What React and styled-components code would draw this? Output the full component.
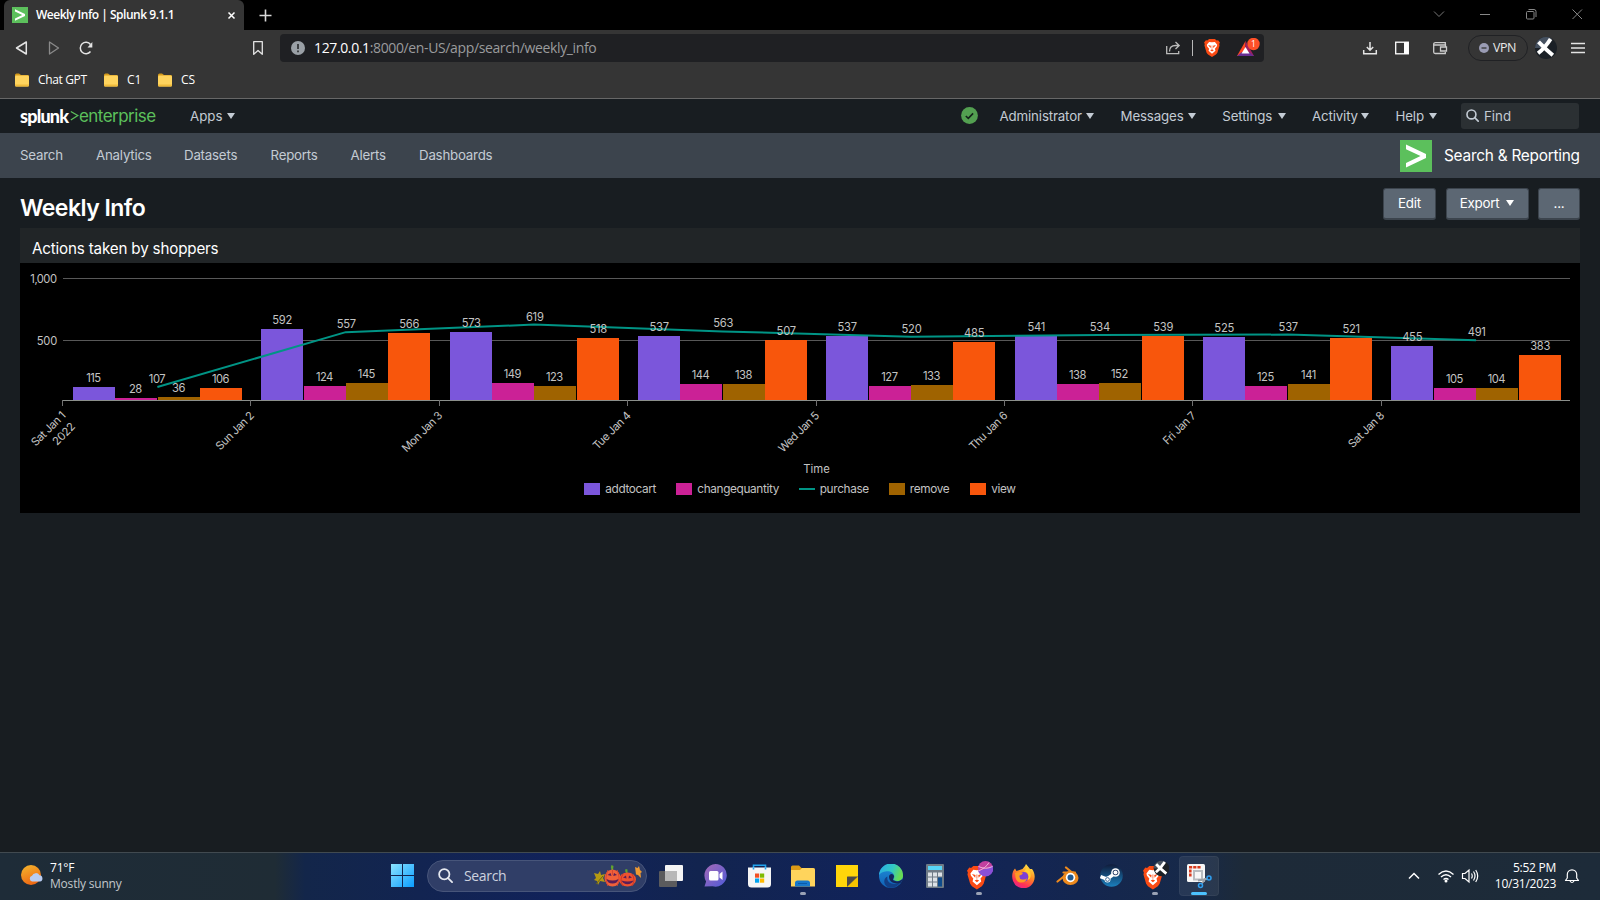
import React from "react";
import styled, { createGlobalStyle, css } from "styled-components";

const Global = createGlobalStyle`
  * { box-sizing: border-box; }
  body { margin: 0; background: #181d21; overflow: hidden; }
  svg { display: block; flex: none; }
`;

const ui = `"Open Sans", "Noto Sans", sans-serif`;
const web = `Inter, Roboto, sans-serif`;

const Screen = styled.div`
  width: 1600px;
  height: 900px;
  display: flex;
  flex-direction: column;
  background: #181d21;
  font-family: ${web};
  white-space: nowrap;
`;

/* Text with an optional fixed advance, so neighbours keep their place */
const Text = styled.span`
  flex: none;
  width: ${(p) => (p.$w ? p.$w + "px" : "auto")};
  letter-spacing: ${(p) => p.$ls || 0}px;
`;

/* ---------- browser ---------- */
const TabStrip = styled.div`
  height: 30px;
  flex: none;
  background: #000;
  display: flex;
  align-items: center;
  padding-left: 4px;
  font-family: ${ui};
`;
const Tab = styled.div`
  width: 240px;
  height: 30px;
  background: #353535;
  border-radius: 6px 6px 0 0;
  display: flex;
  align-items: center;
  padding: 0 8px 0 8px;
  color: #fff;
  font-size: 12px;
  font-weight: 600;
`;
const TabTitle = styled.span`
  flex: 1;
  margin-left: 8px;
  padding-bottom: 1px;
  letter-spacing: -0.48px;
`;
const NewTab = styled.div`
  margin-left: 15px;
  flex: 1;
`;
const WindowButtons = styled.div`
  display: flex;
  gap: 34px;
  margin-right: 17px;
  padding-bottom: 2px;
`;
const Toolbar = styled.div`
  height: 35px;
  flex: none;
  background: #353535;
  display: flex;
  align-items: center;
  padding: 1px 14px 0 14px;
  font-family: ${ui};
`;
const NavButtons = styled.div`
  display: flex;
  gap: 16px;
  width: 237px;
`;
const AddressBar = styled.div`
  margin-left: 15px;
  width: 984px;
  height: 28px;
  background: #1f2023;
  border-radius: 4px;
  display: flex;
  align-items: center;
  padding: 0 3px 0 11px;
`;
const Url = styled.span`
  flex: 1;
  margin-left: 9px;
  padding-bottom: 1px;
  font-size: 14px;
  letter-spacing: -0.37px;
  color: #9a9b9d;
  b { color: #fff; font-weight: 400; }
`;
const BarIcons = styled.div`
  display: flex;
  align-items: center;
`;
const Divider = styled.div`
  width: 1px;
  height: 16px;
  background: #b9b9b9;
  margin: 0 11px 0 11px;
`;
const ToolIcons = styled.div`
  flex: 1;
  display: flex;
  align-items: center;
  justify-content: flex-end;
`;
const Vpn = styled.div`
  width: 60px;
  height: 26px;
  margin: 0 6px 0 20px;
  border: 1px solid #202124;
  border-radius: 13px;
  display: flex;
  align-items: center;
  padding: 0 0 1px 10px;
  gap: 4px;
  color: #e8e8e8;
  font-size: 12.5px;
  letter-spacing: -0.5px;
`;
const Bookmarks = styled.div`
  height: 34px;
  flex: none;
  background: #353535;
  border-bottom: 1px solid #676767;
  display: flex;
  align-items: center;
  padding: 0 0 4px 14px;
  font-family: ${ui};
  font-size: 12px;
  color: #fff;
`;
const Bookmark = styled.div`
  display: flex;
  align-items: center;
  gap: 8px;
  margin-right: ${(p) => p.$mr}px;
`;

/* ---------- splunk chrome ---------- */
const SplunkBar = styled.div`
  height: 34px;
  flex: none;
  display: flex;
  align-items: center;
  padding: 0 21px 1px 20px;
  color: #c3cbd4;
  font-size: 13.3px;
`;
const Logo = styled.div`
  width: 170px;
  display: flex;
  align-items: center;
  line-height: 20px;
`;
const LogoWord = styled.span`
  width: 50px;
  font-family: Lato, sans-serif;
  font-weight: 900;
  font-size: 18px;
  letter-spacing: -0.8px;
  color: #fff;
`;
const LogoProduct = styled.span`
  font-family: ${web};
  font-size: 17px;
  letter-spacing: -0.55px;
  color: #5cc05c;
`;
const MenuItem = styled.div`
  display: flex;
  align-items: center;
  margin-right: ${(p) => p.$mr || 0}px;
`;
const Caret = styled.i`
  width: 0;
  height: 0;
  border: 4px solid transparent;
  border-top: 6px solid currentColor;
  border-bottom: 0;
  margin-left: ${(p) => p.$ml || 4.5}px;
`;
const Spacer = styled.div`
  flex: 1;
`;
const FindBox = styled.div`
  width: 118px;
  height: 26px;
  margin-top: 1px;
  border-radius: 3px;
  background: #2b3033;
  display: flex;
  align-items: center;
  gap: 5px;
  padding: 0 0 1px 5px;
`;
const AppNav = styled.nav`
  height: 45px;
  flex: none;
  background: #3c444d;
  display: flex;
  align-items: center;
  padding: 0 20px;
  color: #c3cbd4;
  font-size: 13.3px;
`;
const NavLink = styled(Text)`
  padding-bottom: 1px;
`;
const AppName = styled.div`
  display: flex;
  align-items: center;
  gap: 12px;
  color: #fff;
  font-size: 15.4px;
`;
const TitleRow = styled.div`
  height: 50px;
  flex: none;
  display: flex;
  justify-content: space-between;
  padding: 10px 20px 0;
`;
const Title = styled.h1`
  margin: 4px 0 0;
  font-size: 23px;
  line-height: 32px;
  font-weight: 600;
  letter-spacing: -0.53px;
  color: #fff;
`;
const Buttons = styled.div`
  display: flex;
  gap: 9.5px;
`;
const Button = styled.div`
  width: ${(p) => p.$w}px;
  height: 32px;
  border: 1px solid #3c444d;
  border-bottom-width: 2px;
  border-radius: 3px;
  background: #5c6773;
  color: #fff;
  display: flex;
  align-items: center;
  justify-content: center;
  padding-bottom: 1px;
  font-size: 13.4px;
  letter-spacing: -0.25px;
`;
const Panel = styled.section`
  margin: 0 20px;
  height: 285px;
  flex: none;
  background: #000;
`;
const PanelHead = styled.div`
  height: 35px;
  background: #212527;
  padding: 4px 0 0 12px;
  line-height: 33px;
  color: #fff;
  font-size: 15.2px;
  letter-spacing: -0.18px;
`;
const AxisTitle = styled.div`
  height: 16px;
  line-height: 17px;
  text-align: center;
  padding-left: 33px;
  font-size: 11.3px;
  color: #c3c3c3;
`;
const Legend = styled.div`
  height: 24px;
  display: flex;
  align-items: center;
  justify-content: center;
  gap: 20.5px;
  font-size: 11.8px;
  color: #c3c3c3;
`;
const LegendItem = styled.div`
  display: flex;
  align-items: center;
  gap: 5px;
`;
const Swatch = styled.i`
  width: 16px;
  height: ${(p) => (p.$line ? 2 : 12)}px;
  background: ${(p) => p.$c};
`;

/* ---------- chart ---------- */
const DAYS = [
  ["Sat Jan 1", 115, 28, 107, 36, 106],
  ["Sun Jan 2", 592, 124, 557, 145, 566],
  ["Mon Jan 3", 573, 149, 619, 123, 518],
  ["Tue Jan 4", 537, 144, 563, 138, 507],
  ["Wed Jan 5", 537, 127, 520, 133, 485],
  ["Thu Jan 6", 541, 138, 534, 152, 539],
  ["Fri Jan 7", 525, 125, 537, 141, 521],
  ["Sat Jan 8", 455, 105, 491, 104, 383],
];
const COLORS = ["#7b56db", "#cb2196", "#9f6300", "#f8560c"];
const STEP = 188.38;
const X0 = 62.5;
const barTop = (v) => Math.round(401 - v * 0.121);
const lineY = (v) => 400 - v * 0.1218;

const ChartText = styled.text`
  font-family: ${web};
  font-size: ${(p) => p.$size || 11.2}px;
  letter-spacing: ${(p) => p.$ls || 0}px;
  fill: #c3c3c3;
`;

function Chart() {
  const pts = DAYS.map((d, i) => [X0 + (i + 0.5) * STEP + 0.7, lineY(d[3]), d[3]]);
  const bars = DAYS.flatMap((d, i) =>
    [d[1], d[2], d[4], d[5]].map((v, k) => ({
      v,
      c: COLORS[k],
      x: Math.round(X0 + i * STEP + 10.32 + k * 42.35),
      y: barTop(v),
    }))
  );
  return (
    <svg width="1560" height="198" viewBox="20 263 1560 198">
      <path d="M63 278.5H1570M63 340.5H1570" stroke="#585858" />
      {bars.map((b) => (
        <rect key={b.x} x={b.x} y={b.y} width="42" height={400 - b.y} fill={b.c} />
      ))}
      <path d="M62 400.5H1570" stroke="#8b8f8b" />
      {DAYS.map((d, i) => (
        <path key={i} d={`M${Math.floor(X0 + i * STEP) + 0.5} 400V406`} stroke="#707070" />
      ))}
      <polyline points={pts.map((p) => p[0] + "," + p[1]).join(" ")} fill="none" stroke="#009485" strokeWidth="2" strokeLinejoin="round" />
      {bars.map((b) => (
        <ChartText key={b.x} x={b.x + (b.v < 200 ? 20.4 : 21.2)} y={b.y - 4.6} textAnchor="middle" $ls={b.v < 200 ? -0.5 : -0.25}>{b.v}</ChartText>
      ))}
      {pts.map((p) => (
        <ChartText key={p[0]} x={p[0] + (p[2] < 200 ? -0.4 : 0.6)} y={p[1] - 4} textAnchor="middle" $ls={p[2] < 200 ? -0.5 : -0.25}>{p[2]}</ChartText>
      ))}
      <ChartText x="56.500" y="283" textAnchor="end" $ls={-0.5}>1,000</ChartText>
      <ChartText x="57" y="344.5" textAnchor="end" $ls={-0.2}>500</ChartText>
      {DAYS.map((d, i) => (
        <g key={i} transform={`translate(${X0 + i * STEP + 3.6} 416.5) rotate(-45)`}>
          <ChartText textAnchor="end" $size={11.2} $ls={-0.5}>{d[0]}</ChartText>
          {i === 0 && <ChartText x="-1" y="14.5" textAnchor="end" $size={11.2} $ls={-0.3}>2022</ChartText>}
        </g>
      ))}
    </svg>
  );
}

/* ---------- taskbar ---------- */
const Taskbar = styled.div`
  margin-top: auto;
  height: 48px;
  flex: none;
  border-top: 1px solid #414a50;
  background: linear-gradient(90deg, #1e2c38 0, #1f2c35 275px, #13264a 305px, #122451 420px, #11225a 560px, #12244f 700px, #11235a 880px, #14264f 1080px, #172949 1190px, #1d2a38 1245px, #1d2b39 100%);
  display: flex;
  align-items: center;
  padding-bottom: 2px;
  font-family: ${ui};
  color: #fff;
`;
const Weather = styled.div`
  width: 370px;
  padding-left: 20px;
  display: flex;
  align-items: center;
  gap: 6px;
  font-size: 12px;
  line-height: 16px;
  letter-spacing: -0.2px;
`;
const Muted = styled.div`
  color: #c2c7cb;
`;
const TaskIcons = styled.div`
  display: flex;
  align-items: center;
  gap: 4px;
`;
const TaskSlot = styled.div`
  position: relative;
  width: 40px;
  height: 40px;
  border-radius: 4px;
  display: flex;
  align-items: center;
  justify-content: center;
  margin-left: ${(p) => p.$ml || 0}px;
  ${(p) => p.$active && css`background: #ffffff12; box-shadow: inset 0 0 0 1px #ffffff0c;`}
  ${(p) => (p.$active || p.$open) && css`
    &::after {
      content: "";
      position: absolute;
      bottom: 1px;
      left: 50%;
      transform: translateX(-50%);
      width: ${p.$active ? 16 : 6}px;
      height: 3px;
      border-radius: 2px;
      background: ${p.$active ? "#4cc2ff" : "#9aa2b5"};
    }
  `}
`;
const SearchBox = styled.div`
  width: 220px;
  height: 32px;
  margin: 0 0 0 1px;
  border-radius: 16px;
  border: 1px solid #47557a;
  background: #303e67;
  display: flex;
  align-items: center;
  padding: 0 3px 0 10px;
  font-size: 14px;
  letter-spacing: -0.35px;
  color: #cdd2df;
`;
const SearchHint = styled.span`
  flex: 1;
  margin-left: 11px;
  padding-bottom: 1px;
`;
const Tray = styled.div`
  margin-left: auto;
  margin-right: 20px;
  display: flex;
  align-items: center;
`;
const Clock = styled.div`
  width: 77px;
  margin-right: 8px;
  text-align: right;
  font-size: 12px;
  line-height: 16px;
  letter-spacing: -0.25px;
`;

/* ---------- drawings ---------- */
const Svg = styled.svg`
  margin-left: ${(p) => p.$ml || 0}px;
`;
const S = ({ w = 24, h = w, vb, ml, children }) => (
  <Svg $ml={ml} width={w} height={h} viewBox={vb || `0 0 ${w} ${h}`} fill="none">{children}</Svg>
);
const SplunkMark = ({ size }) => (
  <S w={size} vb="0 0 32 32">
    <path fill="#5cc05c" d="M0 0h32v32H0z" />
    <path fill="#fff" d="M6 4.5 26 14v4L6 27.500v-4.600L20.500 16 6 9.200z" />
  </S>
);
const Folder = () => (
  <S w={16} h={14}>
    <path d="M1 2Q1 .5 2.500.5H5l2 1.500h7Q15 2 15 3.500v2H1z" fill="#d49a1c" />
    <rect x="1" y="2.500" width="14" height="11" rx="1.200" fill="#ffd45e" />
    <path d="M1 12.500Q1 13.500 2.200 13.500h11.600Q15 13.500 15 12.300V11.500H1z" fill="#f0bb3c" />
  </S>
);
const Lion = () => (
  <>
    <path d="M4.500 2 7 0h8l2.500 2 2-.3L22 5l-1 2 .5 2-3 10-2 2.500L11 25l-5.500-3.500-2-2.500-3-10L1 7 0 5l2.500-3.300z" fill="#fb4b14" />
    <path d="M11 4.500 7 4 3.800 8l.6 2.400 2.600 3-.8 3L11 20.500l4.800-4.100-.8-3 2.600-3 .6-2.400L15 4z" fill="#fff" />
    <path d="m5.500 8.500 4 1-.4 3zm11 0-4 1 .4 3zM8.500 15.500l2.500-1.200 2.500 1.200L11 17.300z" fill="#fb4b14" />
    <path d="M11 9v4.500" stroke="#fb4b14" strokeWidth=".8" />
  </>
);
const XMark = ({ r }) => (
  <g>
    <circle r={r} fill="#1b2026" />
    <path d={`M${-r} 0A${r} ${r} 0 0 1 ${r * 0.5} ${-r * 0.86}L0 0z`} fill="#465160" />
    <path d={`M${-r * 0.68} ${-r * 0.55}Q0 ${r * 0.15} ${r * 0.62} ${r * 0.66}M${r * 0.42} ${-r * 0.82}Q${-r * 0.1} 0 ${-r * 0.72} ${r * 0.48}`} stroke="#fff" strokeWidth={r * 0.36} />
  </g>
);
const Search = ({ s, sw = 1.6, c }) => (
  <S w={s} vb="0 0 16 16">
    <circle cx="6.700" cy="6.700" r="5.500" stroke={c} strokeWidth={sw} />
    <path d="m10.700 10.700 4.300 4.300" stroke={c} strokeWidth={sw} strokeLinecap="round" />
  </S>
);

const Pumpkins = () => (
  <S w={50} h={24}>
    <path d="m1 9 4 1 2-3 1 4 4-1-2 4 2 4-5-1-2 4-1-4-3-1 2-2z" fill="#b59a12" />
    <path d="m3 20 7-8" stroke="#6d6510" />
    <path d="M18.500 6Q17 3 18.500 1l2 1-.5 4z" fill="#61a52f" />
    <ellipse cx="19.500" cy="14" rx="8" ry="8.600" fill="#f0613a" />
    <path d="M15 6q-4 8 0 16M24 6q4 8 0 16M19.500 6v5" stroke="#d94632" />
    <path d="m14.500 11 3-2 1 3zm9.500 0-3-2-.7 3zM13.500 15q6 3 12 0-1 4.500-6 4.500t-6-4.500" fill="#5b1d57" />
    <path d="M33 9q-1.500-2-.5-4l2 .5V9z" fill="#61a52f" />
    <ellipse cx="34.500" cy="15.500" rx="8.500" ry="7" fill="#ee5230" />
    <path d="M30 10q-4 6 0 12M39 10q4 6 0 12" stroke="#cb3826" />
    <path d="m30 13.500 3-2 .5 3zm9 0-3-2-.5 3zM28.500 16.500q6 1.800 12 0-2 3.800-6 3.800t-6-3.800" fill="#5b1d57" />
    <path d="m42 3 2.500 1L46 2l1 4 2 2-1.500 1 .5 5-3-3-2-.5z" fill="#ef9a32" />
  </S>
);

const Start = () => (
  <S w={23}>
    <defs><linearGradient id="win" gradientUnits="userSpaceOnUse" x1="0" y1="0" x2="23" y2="23"><stop stopColor="#8be3ff" /><stop offset="1" stopColor="#0a9dff" /></linearGradient></defs>
    <path fill="url(#win)" d="M0 0h11v11H0zM12 0h11v11H12zM0 12h11v11H0zM12 12h11v11H12z" />
  </S>
);
const TaskView = () => (
  <S w={24} h={22}>
    <rect x="6" width="18" height="16" rx="1" fill="#f4f4f4" />
    <rect y="6" width="18" height="16" rx="1" fill="#5b5b5d" />
    <path d="M6 6h12v10H6z" fill="#b7b7b7" />
  </S>
);
const Chat = () => (
  <S w={23}>
    <defs><linearGradient id="chat" x1="0" y1="0" x2="1" y2="1"><stop stopColor="#a569b6" /><stop offset="1" stopColor="#4f5bd8" /></linearGradient></defs>
    <path d="M11.500 0a11.300 11.300 0 1 1-3 22.200L.5 22.500l1.600-5A11.500 11.500 0 0 1 11.500 0" fill="url(#chat)" />
    <rect x="5" y="7" width="9.500" height="9.500" rx="1.500" fill="#fff" />
    <path d="m15.500 10 3-2.500v8.500l-3-2.500z" fill="#fff" />
  </S>
);
const Store = () => (
  <S w={23} h={24}>
    <path d="M5.500 6V1.200h12V6" stroke="#21a3ee" strokeWidth="1.600" />
    <path d="M0 3.500h23V20q0 3.500-3.500 3.500h-16Q0 23.500 0 20z" fill="#f5f5f5" />
    <path d="M5.500 5.500V3.500M17.500 5.500V3.500" stroke="#21a3ee" strokeWidth="1.600" />
    <path d="M7 9.500h4.200v4.200H7z" fill="#f25022" /><path d="M12 9.500h4.200v4.200H12z" fill="#7fba00" />
    <path d="M7 14.500h4.200v4.200H7z" fill="#00a4ef" /><path d="M12 14.500h4.200v4.200H12z" fill="#ffb900" />
  </S>
);
const Explorer = () => (
  <S w={24} h={22}>
    <path d="M0 2Q0 .5 1.500.5H8L10.500 3H22q2 0 2 2v4H0z" fill="#dc9a16" />
    <path d="M0 5h9l2-2h11q2 0 2 2v16.500H0z" fill="#ffd45c" />
    <path d="M4 21.500V18q0-2.500 2.500-2.500h10Q19 15.500 19 18v3.500z" fill="#1778cc" /><path d="M7 18.500h9" stroke="#0b5ba8" />
  </S>
);
const Notes = () => (
  <S w={22}>
    <path d="M0 0h22v11.500L11 22H0z" fill="#ffd60a" />
    <path d="M11 22V12q0-.5.5-.5H22z" fill="#4c4a48" />
    <path d="M11 22h11V11.500z" fill="#f5c400" />
  </S>
);
const Edge = () => (
  <S w={24}>
    <defs>
      <linearGradient id="e1" x1="0" y1="0" x2="1" y2=".3"><stop stopColor="#2aa9e8" /><stop offset=".6" stopColor="#32c8c3" /><stop offset="1" stopColor="#67db55" /></linearGradient>
      <linearGradient id="e2" x1="0" y1="0" x2="0" y2="1"><stop stopColor="#1e8fdb" /><stop offset="1" stopColor="#1160b4" /></linearGradient>
    </defs>
    <circle cx="12" cy="12" r="12" fill="url(#e2)" />
    <path d="M0 11A12 12 0 0 1 24 12c0 5-6 6-9 4.300-1.500-.8.500-1.800.3-4C15 8.500 11 6.800 7.500 7.200 4 7.500 1 9 0 11" fill="url(#e1)" />
    <path d="M8.500 12.500c-1.500 6 5 9.500 13 6-3 4.500-8 6-12 5-6-3-5-9.500-1-11" fill="#123f86" />
    <path d="M15 12.300c0 2-2 3.200-.2 4.300 2.500 1.400 6 1 8.700-1.600-.5 2-1 2.800-1.800 3.800-5 2-12-.6-11.700-6.300.2-3 4.500-3.500 5-.2" fill="#13265a" />
  </S>
);
const Calc = () => (
  <S w={18} h={24}>
    <rect width="18" height="24" rx="1" fill="#6f7b86" /><path d="M2 2h14v4H2z" fill="#57d5f7" />
    <path d="M2 8.500h4v4H2zm5 0h4v4H7zm5 0h4v4h-4zM2 13.500h4v4H2zm5 0h4v4H7zM2 18.500h4v4H2zm5 0h4v4H7z" fill="#dde2e6" />
    <path d="M12 13.500h4v9h-4z" fill="#0f4c8c" />
  </S>
);
const BraveTask = ({ x }) => (
  <S w={28} h={32}>
    <g transform="translate(2 6) scale(.9 .94)"><Lion /></g>
    {x ? <g transform="translate(20.500 8.500)"><XMark r={7.800} /></g> : (
      <g>
        <circle cx="20.500" cy="8.500" r="7.600" fill="#c2409f" />
        <path d="M13 10.500Q21 10 27.500 5.500A7.600 7.600 0 0 1 13.500 12z" fill="#8a50d8" />
        <path d="M13.500 6.500q7 3.500 14 0M13.200 11Q21 8 24 2.500" stroke="#f3b5dc" />
      </g>
    )}
  </S>
);
const Firefox = () => (
  <S w={23} h={24}>
    <defs><linearGradient id="ff" x1=".8" y1="0" x2=".3" y2="1"><stop stopColor="#fff04a" /><stop offset=".45" stopColor="#ff8a22" /><stop offset=".8" stopColor="#ff3156" /><stop offset="1" stopColor="#e3258c" /></linearGradient></defs>
    <path d="M3 4.500 4.500 7l3-1 3-1L13 2l1-2 4 5 2 0c3 4 3.500 9 1.500 13A11.200 11.200 0 0 1 1 17C-.8 12 .5 7 3 4.500" fill="url(#ff)" />
    <circle cx="11.500" cy="13" r="5" fill="#7d3fd6" />
    <path d="M3 9q5-2 8 0-1 2-3.500 2.500Q7 15 10 15.500q4 .5 5-1.500-1 4.500-5.500 4.500-5 0-6-5z" fill="#ff9a24" />
    <path d="M12 8q3-1 4 2 1.500 3-.5 6 4-1 3-7-1-4-4-5z" fill="#ffcf32" />
  </S>
);
const Blender = () => (
  <S w={23} h={20}>
    <path d="M7.500 6.500H19M1.500 15.500 14 5.500M10 1.500l6 5" stroke="#ee8a1d" strokeWidth="2.200" strokeLinecap="round" />
    <ellipse cx="14.500" cy="12" rx="8" ry="7" fill="#ee8a1d" /><circle cx="14.500" cy="11.500" r="4.700" fill="#fff" /><circle cx="14.500" cy="11.500" r="3" fill="#235a91" />
  </S>
);
const Steam = () => (
  <S w={23}>
    <defs><linearGradient id="st" x1="0" y1="0" x2="0" y2="1"><stop stopColor="#101b3a" /><stop offset="1" stopColor="#1b80bd" /></linearGradient></defs>
    <circle cx="11.500" cy="11.500" r="11.300" fill="url(#st)" />
    <path d="M.5 12.500 7 15l5-3.500 3-4" stroke="#fff" strokeWidth="3.400" />
    <circle cx="15.500" cy="8.500" r="4.300" fill="#fff" /><circle cx="15.500" cy="8.500" r="2.800" fill="#19305a" /><circle cx="15.500" cy="8.500" r="2" fill="#fff" />
    <circle cx="7.500" cy="15.500" r="3" fill="#fff" /><circle cx="7.500" cy="15.500" r="1.900" stroke="#1b4e80" strokeWidth=".8" />
  </S>
);
const Snip = () => (
  <S w={26} h={26}>
    <rect x="1" y="1" width="18" height="18" rx="1.500" fill="#f7f7f7" />
    <path d="M3 3h3.200v2.600H3zM7.200 3h3.200v2.600H7.200zM11.400 3h3.200v2.600h-3.200zM3 6.600h2.600v3H3zM3 10.600h2.600v3H3z" fill="#d83b1e" />
    <path d="M8 16.500V8h8v8.500z" stroke="#b8bcc0" strokeWidth="2" />
    <path d="m15.800 20.500 4-5M12 17.500l9-1.500" stroke="#9a9fa5" strokeWidth="1.800" />
    <circle cx="23" cy="15" r="2" stroke="#2f9ff0" strokeWidth="1.500" /><circle cx="14.500" cy="22.500" r="2" stroke="#2f9ff0" strokeWidth="1.500" />
  </S>
);

const LEGEND = [
  ["addtocart", COLORS[0], 50.5],
  ["changequantity", COLORS[1], 81],
  ["purchase", "#009485", 48.5],
  ["remove", COLORS[2], 40],
  ["view", COLORS[3], 24.5],
];
const NAV = [["Search", 76], ["Analytics", 88], ["Datasets", 86.5], ["Reports", 80], ["Alerts", 68.5], ["Dashboards", 80]];
const MENUS = [["Administrator", 82, 26.5], ["Messages", 62.5, 26.8], ["Settings", 50.7, 26.5], ["Activity", 44.5, 26.5], ["Help", 29, 24]];

export default function App() {
  const g = "#e4e4e4";
  return (
    <Screen>
      <Global />
      <TabStrip>
        <Tab>
          <SplunkMark size={16} />
          <TabTitle>Weekly Info | Splunk 9.1.1</TabTitle>
          <S w={9}><path d="m1.500 1.500 6 6m0-6-6 6" stroke="#fff" strokeWidth="1.500" /></S>
        </Tab>
        <NewTab><S w={13}><path d="M6.500.5v12m-6-6h12" stroke="#d8d8d8" strokeWidth="1.600" /></S></NewTab>
        <WindowButtons>
          <S w={12}><path d="m1 3.500 5 5 5-5" stroke="#777" /></S>
          <S w={12}><path d="M1 6.500h10" stroke="#888" /></S>
          <S w={12}><rect x="1.500" y="3.500" width="7.500" height="7.500" rx="1" stroke="#888" /><path d="M3.500 1.500H9q2 0 2 2V9" stroke="#888" /></S>
          <S w={12}><path d="m1.500 1.500 9.500 9.500m0-9.500-9.500 9.500" stroke="#888" /></S>
        </WindowButtons>
      </TabStrip>
      <Toolbar>
        <NavButtons>
          <S w={16}><path d="M12.300 2v12L2.500 8z" stroke={g} strokeWidth="1.500" strokeLinejoin="round" /></S>
          <S w={16}><path d="M3.500 2v12l9-6z" stroke="#8a8a8a" strokeWidth="1.300" strokeLinejoin="round" /></S>
          <S w={16}><path d="M12.500 4.500A5.700 5.700 0 1 0 12.500 11.500" stroke={g} strokeWidth="1.500" /><path d="M14.300 2v5.500H9.500z" fill={g} /></S>
        </NavButtons>
        <S w={14} h={16}><path d="M2.700 1.700h8.600v12.600L7 10.500l-4.300 3.800z" stroke={g} strokeWidth="1.300" strokeLinejoin="round" /></S>
        <AddressBar>
          <S w={14}><circle cx="7" cy="7" r="7" fill="#9aa0a6" /><path d="M7 3v5M7 9.500v1.700" stroke="#1f2023" strokeWidth="1.500" /></S>
          <Url><b>127.0.0.1</b>:8000/en-US/app/search/weekly_info</Url>
          <BarIcons>
            <S w={16}><path d="M1.700 6v7.700h12V11M4.500 11.500q0-6 6-6h3M10.500 2l3.700 3.500-3.700 3.500" stroke="#bbb" strokeWidth="1.300" /></S>
            <Divider />
            <S w={16} h={18} vb="0 0 22 25"><Lion /></S>
            <S w={26} h={20} ml={15}>
              <path d="M10.500 3 2 18h5l3.500-7z" fill="#ff4724" /><path d="M10.500 3v8l3.500 7h5z" fill="#9e1f63" /><path d="M2 18h17l-5-4H7z" fill="#662d91" /><path d="m10.500 9 4 6.500h-8z" fill="#fff" />
              <circle cx="18.500" cy="6" r="6.200" fill="#ff5028" />
              <text x="18.500" y="9" fontSize="8.500" textAnchor="middle" fill="#fff" fontFamily="Open Sans">1</text>
            </S>
          </BarIcons>
        </AddressBar>
        <ToolIcons>
          <S w={16}><path d="M8 2v8M4.800 7 8 10.200 11.200 7M1.700 10v3.700h12.600V10" stroke={g} strokeWidth="1.500" /></S>
          <S w={16} ml={16}><rect x="1.700" y="2.200" width="12.600" height="11.600" stroke="#fff" strokeWidth="1.300" /><path d="M10 2h4.500v12H10z" fill="#fff" /></S>
          <S w={16} ml={22}><path d="M13.300 5V2.700H3.500Q1.700 2.700 1.700 4v8q0 1.500 1.500 1.500h10.100V12M2 5h11.500v1.500M8.500 7h6v4h-6z" stroke="#ccc" strokeWidth="1.300" /></S>
          <Vpn><S w={10}><circle cx="5" cy="5" r="5" fill="#9a9cb4" /><path d="M2.500 5h5" stroke="#353535" strokeWidth="1.300" /></S>VPN</Vpn>
          <S w={24} vb="-12 -12 24 24"><XMark r={11} /></S>
          <S w={16} ml={12}><path d="M1 3.500h14M1 8h14M1 12.500h14" stroke={g} strokeWidth="1.500" /></S>
        </ToolIcons>
      </Toolbar>
      <Bookmarks>
        <Bookmark $mr={16}><Folder /><Text $w={49} $ls={-0.35}>Chat GPT</Text></Bookmark>
        <Bookmark $mr={16}><Folder /><Text $w={14}>C1</Text></Bookmark>
        <Bookmark $mr={0}><Folder /><Text>CS</Text></Bookmark>
      </Bookmarks>

      <SplunkBar>
        <Logo>
          <LogoWord>splunk</LogoWord>
          <S w={9} h={12}><path d="m.8 1.500 7 4-7 4.500" stroke="#5cc05c" strokeWidth="1.400" /></S>
          <LogoProduct>enterprise</LogoProduct>
        </Logo>
        <MenuItem><Text $w={32}>Apps</Text><Caret /></MenuItem>
        <Spacer />
        <MenuItem $mr={22}>
          <S w={17}><circle cx="8.500" cy="8.500" r="8.400" fill="#53a051" /><path d="m4.800 9 2.500 2.400 4.800-5" stroke="#14231a" strokeWidth="1.600" /></S>
        </MenuItem>
        {MENUS.map(([t, w, mr]) => (
          <MenuItem key={t} $mr={mr}><Text $w={w} $ls={-0.15}>{t}</Text><Caret /></MenuItem>
        ))}
        <FindBox><Search s={13} sw={2} c="#c3cbd4" />Find</FindBox>
      </SplunkBar>
      <AppNav>
        {NAV.map(([t, w]) => <NavLink key={t} $w={w} $ls={-0.22}>{t}</NavLink>)}
        <Spacer />
        <AppName><SplunkMark size={32} /><Text $w={136} $ls={-0.25}>Search &amp; Reporting</Text></AppName>
      </AppNav>
      <TitleRow>
        <Title>Weekly Info</Title>
        <Buttons>
          <Button $w={53}>Edit</Button>
          <Button $w={83}>Export<Caret $ml={7} /></Button>
          <Button $w={42}>...</Button>
        </Buttons>
      </TitleRow>
      <Panel>
        <PanelHead>Actions taken by shoppers</PanelHead>
        <Chart />
        <AxisTitle>Time</AxisTitle>
        <Legend>
          {LEGEND.map(([t, c, w]) => (
            <LegendItem key={t}><Swatch $c={c} $line={t === "purchase"} /><Text $w={w} $ls={-0.35}>{t}</Text></LegendItem>
          ))}
        </Legend>
      </Panel>

      <Taskbar>
        <Weather>
          <S w={24}>
            <defs><linearGradient id="sun" x1="0" y1="0" x2=".4" y2="1"><stop stopColor="#f5b82e" /><stop offset="1" stopColor="#ee6a14" /></linearGradient></defs>
            <circle cx="11" cy="11" r="10" fill="url(#sun)" />
            <path d="M12 17.500a3 3 0 0 1 0-5.800 4.200 4.200 0 0 1 7.500-.5 3.200 3.200 0 0 1 .5 6.300z" fill="#b9cdf2" />
          </S>
          <div><div>71°F</div><Muted>Mostly sunny</Muted></div>
        </Weather>
        <TaskIcons>
          <TaskSlot $ml={12}><Start /></TaskSlot>
          <SearchBox>
            <Search s={15} sw={1.9} c="#e6e9f0" />
            <SearchHint>Search</SearchHint>
            <Pumpkins />
          </SearchBox>
          <TaskSlot><TaskView /></TaskSlot>
          <TaskSlot><Chat /></TaskSlot>
          <TaskSlot><Store /></TaskSlot>
          <TaskSlot $open><Explorer /></TaskSlot>
          <TaskSlot><Notes /></TaskSlot>
          <TaskSlot><Edge /></TaskSlot>
          <TaskSlot><Calc /></TaskSlot>
          <TaskSlot $open><BraveTask /></TaskSlot>
          <TaskSlot><Firefox /></TaskSlot>
          <TaskSlot><Blender /></TaskSlot>
          <TaskSlot><Steam /></TaskSlot>
          <TaskSlot $open><BraveTask x /></TaskSlot>
          <TaskSlot $active><Snip /></TaskSlot>
        </TaskIcons>
        <Tray>
          <S w={12}><path d="m1 8.500 5-5 5 5" stroke="#fff" strokeWidth="1.500" /></S>
          <S w={18} h={16} ml={17}>
            <path d="M1.500 6.500q7.500-7 15 0M4 9q5-4.600 10 0M6.500 11.500q2.500-2.200 5 0" stroke="#fff" strokeWidth="1.400" /><circle cx="9" cy="13" r="1.500" fill="#fff" />
          </S>
          <S w={18} h={16} ml={6}>
            <path d="M1.500 5.500v5H4l4 3.500V2L4 5.500zM10.500 5.500q1.500 2.500 0 5M12.500 3.500q3 4.500 0 9M14.700 2q4 6 0 12" stroke="#fff" strokeWidth="1.200" />
          </S>
          <Clock><div>5:52 PM</div><div>10/31/2023</div></Clock>
          <S w={16}><path d="M1.500 12.500h13L12.700 10V6.500a4.700 4.700 0 0 0-9.400 0V10zM6 13q2 3 4 0" stroke="#fff" strokeWidth="1.200" strokeLinejoin="round" /></S>
        </Tray>
      </Taskbar>
    </Screen>
  );
}
